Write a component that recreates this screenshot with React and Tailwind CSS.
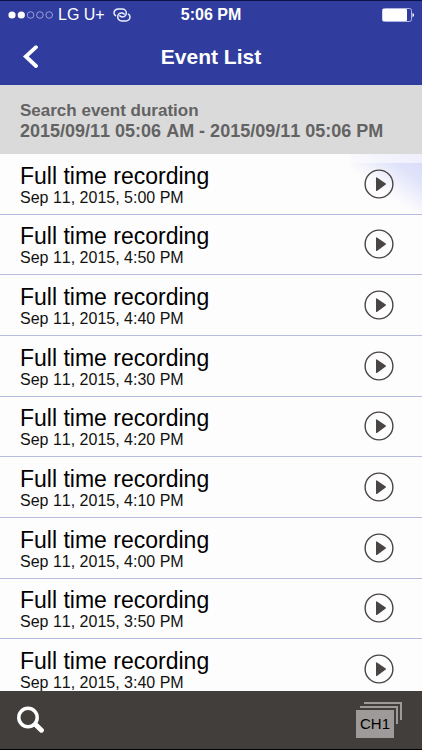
import React from "react";

const EVENTS = ["5:00", "4:50", "4:40", "4:30", "4:20", "4:10", "4:00", "3:50", "3:40"];

const SignalDots = () => (
    <svg width="46" height="8" viewBox="0 0 46 8" aria-hidden="true">
        <circle cx="4" cy="4" r="3.6" fill="#fff" />
        <circle cx="13.3" cy="4" r="3.6" fill="#fff" />
        {[22.6, 31.9, 41.2].map((cx) => (
            <circle key={cx} cx={cx} cy="4" r="3.3" fill="none" stroke="#c3c8ee" strokeWidth="0.7" />
        ))}
    </svg>
);

// personal hotspot: two interlocked loops
const HotspotIcon = () => (
    <svg width="18" height="14" viewBox="0 0 18 14" fill="none" stroke="#eceeff" strokeWidth="1.5" strokeLinecap="round" aria-hidden="true">
        <path d="M2.6 7.6C1.5 6.9 1 6 1 4.9C1 2.7 2.9 1 5.2 1H9.2C11.6 1 13.3 2.8 13.3 5C13.3 7.2 11.6 8.9 9.4 8.9C8.2 8.9 7.3 8.5 6.8 7.8" />
        <path d="M15.4 6.2C16.5 6.9 17 7.9 17 9C17 11.2 15.1 12.9 12.8 12.9H8.8C6.4 12.9 4.7 11.1 4.7 8.9C4.7 6.7 6.4 5 8.6 5C9.8 5 10.7 5.4 11.2 6.1" />
    </svg>
);

const BatteryIcon = () => (
    <svg width="32" height="14" viewBox="0 0 32 14" aria-hidden="true">
        <rect x="0.5" y="0.5" width="29" height="13" rx="2" fill="none" stroke="#aeb4e6" />
        <rect x="0.5" y="1" width="24.5" height="12" rx="1" fill="#fff" />
        <path d="M30.5 5V9.2C31.5 8.8 32 8 32 7.1S31.5 5.4 30.5 5Z" fill="#fff" />
    </svg>
);

const PlayIcon = () => (
    <svg width="30" height="30" viewBox="0 0 30 30" aria-hidden="true">
        <circle cx="15" cy="15" r="13.9" fill="none" stroke="#494544" strokeWidth="1.4" />
        <path d="M12.6 8.9L21.4 15L12.6 21.4Z" fill="#494544" stroke="#494544" strokeWidth="1.2" strokeLinejoin="round" />
    </svg>
);

const StatusBar = () => (
    <div className="grid h-7 grid-cols-[1fr_auto_1fr] items-center border-t border-[#0c1148] px-2 text-[16px] leading-7">
        <div className="flex items-center">
            <SignalDots />
            <span className="ml-1">LG U+</span>
            <span className="ml-2">
                <HotspotIcon />
            </span>
        </div>
        <span className="font-bold">5:06 PM</span>
        <div className="flex justify-end">
            <BatteryIcon />
        </div>
    </div>
);

const EventRow = ({ time }) => (
    <li className="flex items-center justify-between border-b border-[#b9bddd] pr-7 pl-5">
        <div className="pt-1">
            <p className="text-[23px] leading-6 text-black">Full time recording</p>
            <p className="text-[16px] leading-5 text-[#111]">Sep 11, 2015, {time} PM</p>
        </div>
        <button type="button" aria-label={`Play ${time} PM`}>
            <PlayIcon />
        </button>
    </li>
);

export default function App() {
    return (
        <div className="flex h-screen flex-col overflow-hidden bg-[#fefdfd] font-['Liberation_Sans',Arial,sans-serif] [font-kerning:none]">
            <header className="shrink-0 bg-[#303d9e] text-white">
                <StatusBar />
                <div className="grid h-[57px] grid-cols-[1fr_auto_1fr] items-center px-5">
                    <button type="button" aria-label="Back" className="justify-self-start">
                        <svg width="20" height="24" viewBox="0 0 20 24" fill="none" stroke="#fff" strokeWidth="3.8" aria-hidden="true">
                            <path d="M16 2.2L5.8 11.5L16 21" strokeLinecap="round" />
                        </svg>
                    </button>
                    <h1 className="text-[21px] font-bold">Event List</h1>
                </div>
            </header>

            <section className="h-[69px] shrink-0 bg-[#dadada] px-5 pt-4 font-bold text-[#636363]">
                <p className="text-[17px] leading-5">Search event duration</p>
                <p className="text-[18px] leading-5 whitespace-nowrap">2015/09/11 05:06 AM - 2015/09/11 05:06 PM</p>
            </section>

            <main className="min-h-0 flex-1 overflow-hidden bg-[linear-gradient(to_bottom,#fefdfd99_9px,transparent_9px),linear-gradient(215deg,#d5daf8_0%,#dfe3fa_22%,#fefdfd_54%)] bg-[length:72px_72px] bg-right-top bg-no-repeat">
                <ul className="grid h-[546px] auto-rows-fr">
                    {EVENTS.map((time) => (
                        <EventRow key={time} time={time} />
                    ))}
                </ul>
            </main>

            <footer className="flex h-[59px] shrink-0 items-center justify-between border-b border-black bg-[#423e3c] pr-5 pl-4">
                <button type="button" aria-label="Search">
                    <svg width="28" height="28" viewBox="0 0 28 28" fill="none" stroke="#fff" aria-hidden="true">
                        <circle cx="12" cy="11.5" r="9.2" strokeWidth="3.5" />
                        <path d="M18.4 17.6L21 20.2" strokeWidth="3.6" />
                        <path d="M20.5 19.5L25.4 24.2" strokeWidth="5" strokeLinecap="round" />
                    </svg>
                </button>
                <button type="button" className="relative h-9 w-[46px]">
                    <svg width="46" height="36" viewBox="0 0 46 36" aria-hidden="true">
                        <path d="M8 0H46V18H44V2H8Z" fill="#9d9a99" />
                        <path d="M4 4H42V22H40V6H4Z" fill="#9d9a99" />
                        <rect y="8" width="38" height="28" fill="#9d9a99" />
                    </svg>
                    <span className="absolute bottom-0 left-0 w-[38px] text-center text-[15px] leading-7 text-black">CH1</span>
                </button>
            </footer>
        </div>
    );
}
